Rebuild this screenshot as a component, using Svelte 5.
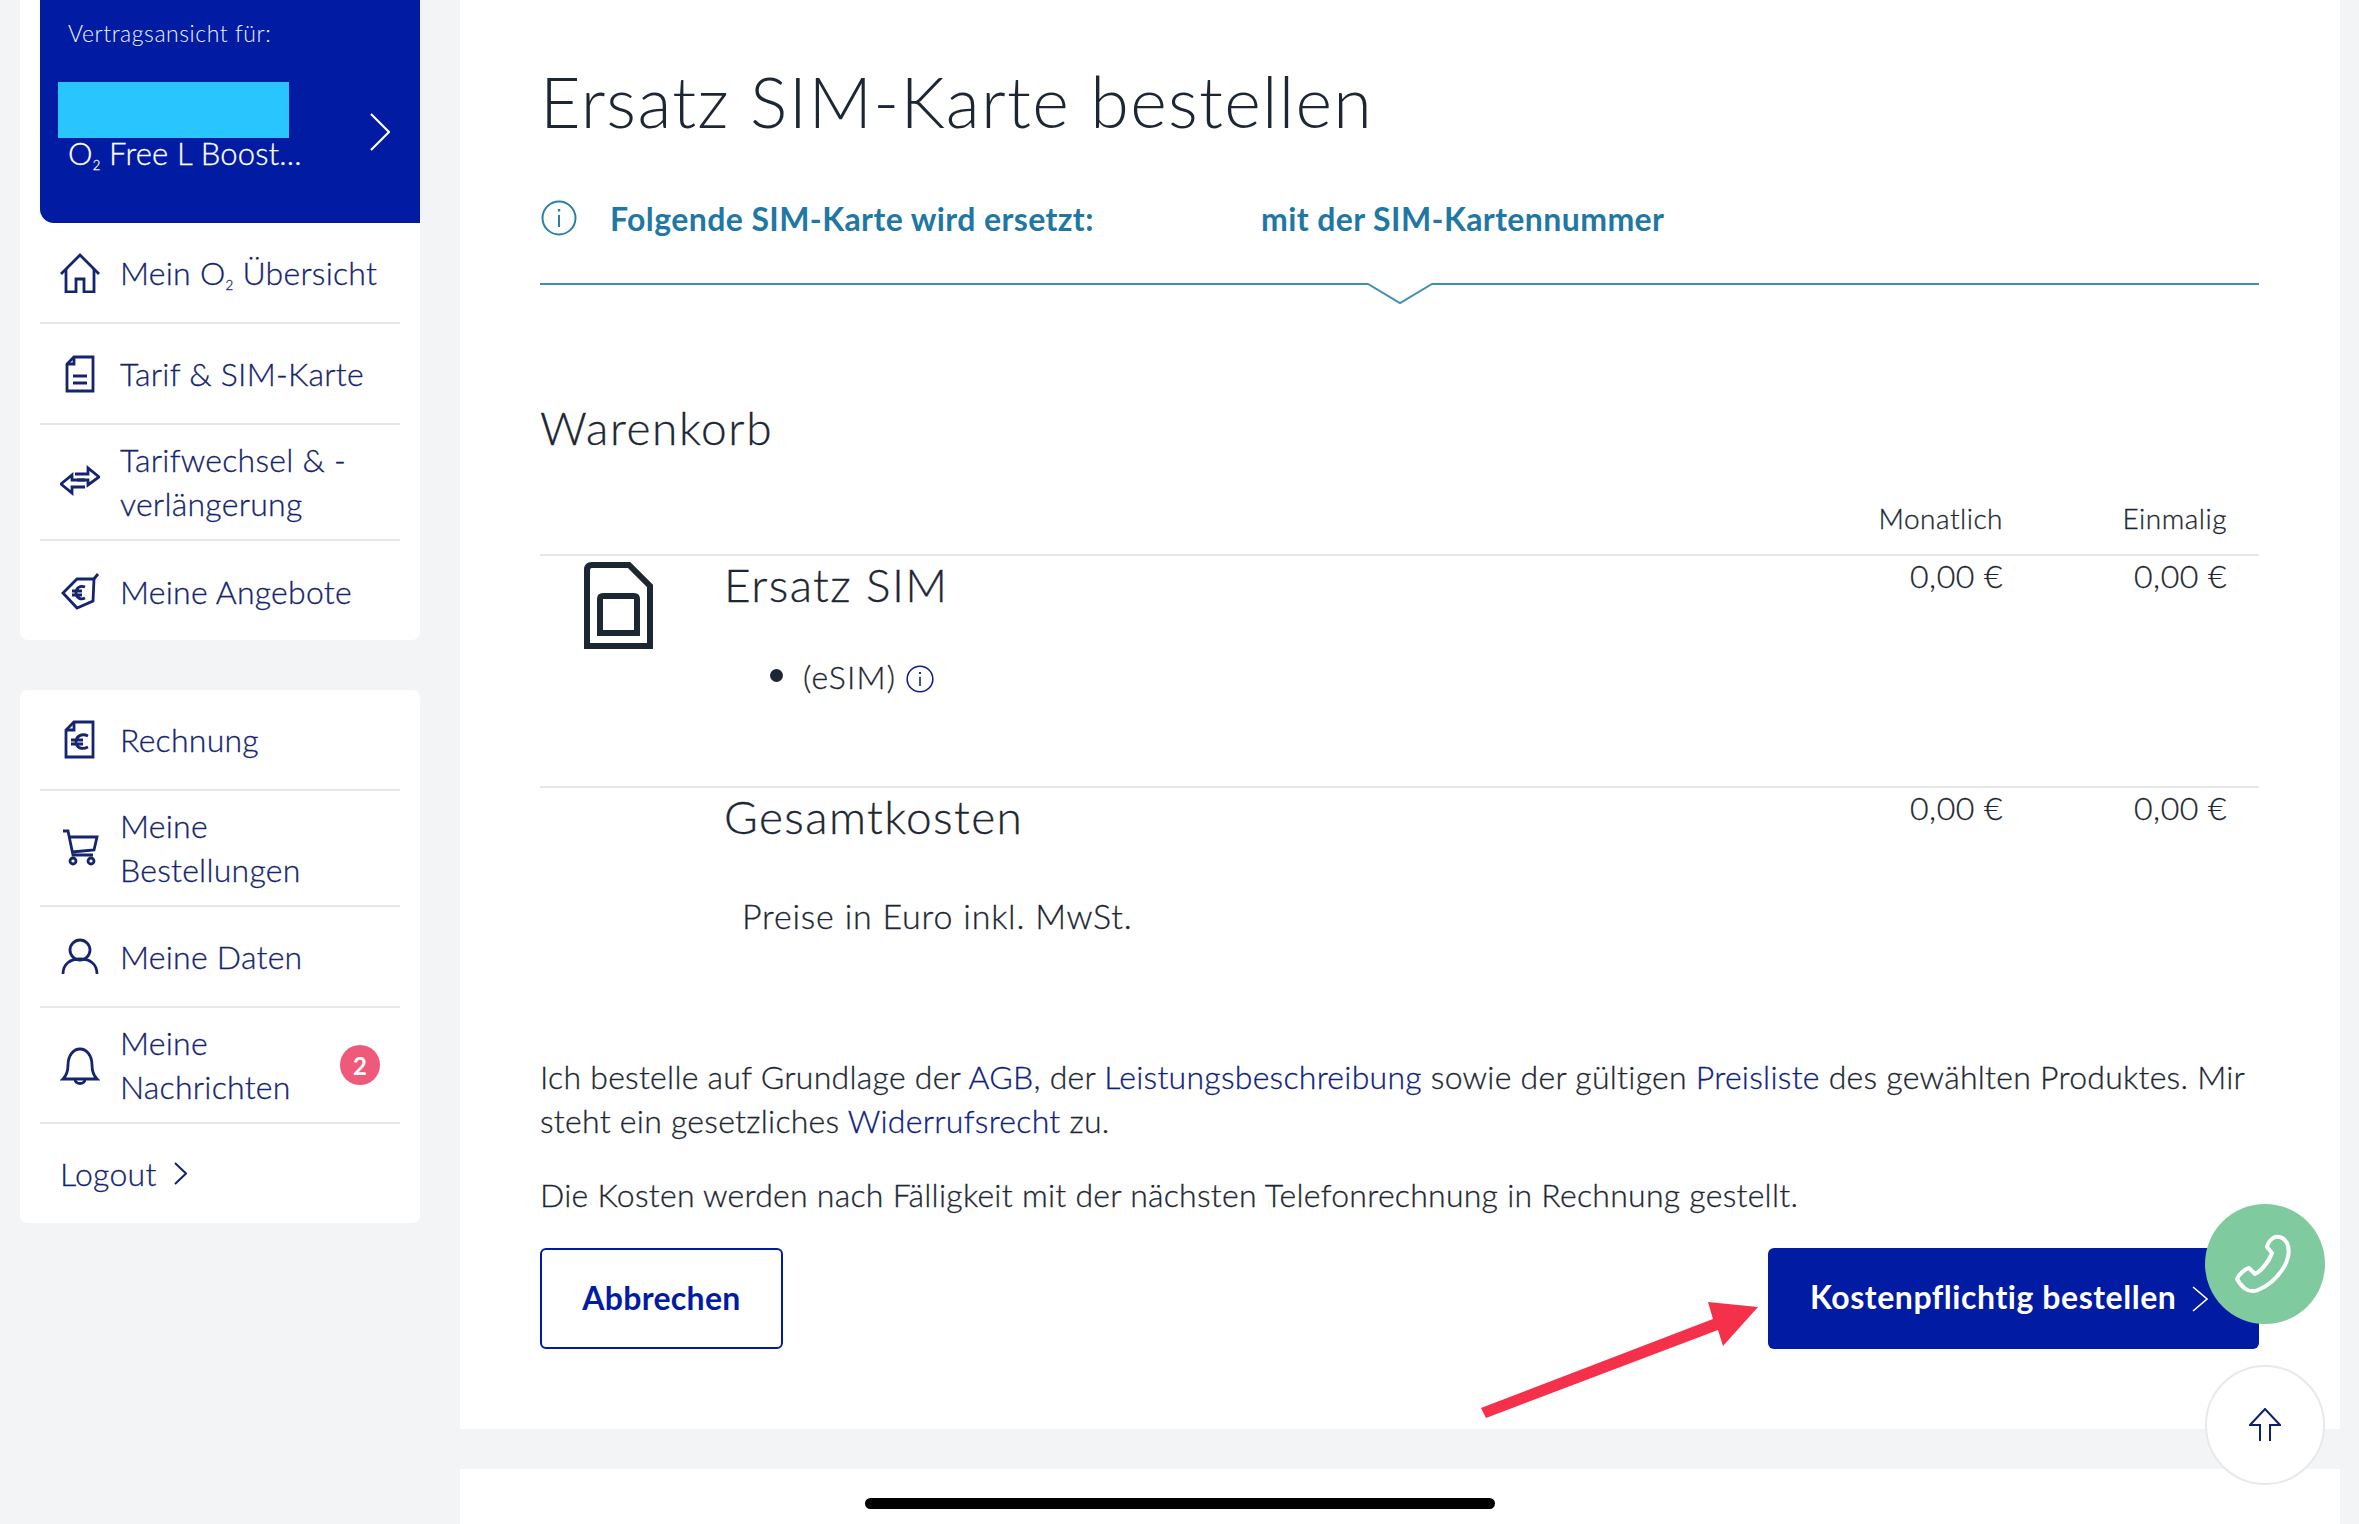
<script>
  const navTop = [
    { icon: 'home', label: 'Mein O', sub: '2', rest: ' Übersicht' },
    { icon: 'doc', label: 'Tarif & SIM-Karte' },
    { icon: 'swap', label: 'Tarifwechsel & - verlängerung' },
    { icon: 'tag', label: 'Meine Angebote' }
  ];
  const navBottom = [
    { icon: 'bill', label: 'Rechnung' },
    { icon: 'cart', label: 'Meine Bestellungen' },
    { icon: 'user', label: 'Meine Daten' },
    { icon: 'bell', label: 'Meine Nachrichten', badge: 2 }
  ];
</script>

{#snippet navIcon(name)}
  <svg class="nav-icon" viewBox="0 0 40 40" fill="none" stroke="currentColor" stroke-width="2.8">
    {#if name === 'home'}
      <path d="M1 21 20 2l19 19" />
      <path d="M6 16v23h10V26h8v13h10V16" />
    {:else if name === 'doc'}
      <path d="M14 3h19v34H7V10z" />
      <path d="M14 3v7H7M13 22h14M13 29h14" />
    {:else if name === 'swap'}
      <path d="M15 12h13V6l11 9-11 8v-5H17" />
      <path d="M25 18H12v-5L1 22l11 9v-6h13" />
    {:else if name === 'tag'}
      <path d="M34 7H17L3 21l14 15 16-7z" />
      <path d="M38 2 33 8" />
      <path d="M25 15c-5-2-9 1-9 6s5 7 9 5M12 19h10M12 23h10" />
    {:else if name === 'bill'}
      <path d="M14 2h19v35H6V10z" />
      <path d="M14 2v8H6" />
      <path d="M28 16c-6-3-12 0-12 6s6 8 12 5M11 20h12M11 24h12" />
    {:else if name === 'cart'}
      <path d="M3 3h5l5 24h20M10 9h27l-3 13-22 2" />
      <circle cx="13" cy="33" r="3" />
      <circle cx="31" cy="33" r="3" />
    {:else if name === 'user'}
      <circle cx="20" cy="13" r="10" />
      <path d="M3 37c0-10 7-15 17-15s17 5 17 15" />
    {:else if name === 'bell'}
      <path d="M3 34c4-4 5-8 5-14 0-9 5-16 12-16s12 7 12 16c0 6 1 10 5 14z" />
      <path d="M15 34c0 6 10 6 10 0" />
    {/if}
  </svg>
{/snippet}

{#snippet navList(items)}
  {#each items as item}
    <a class="nav-item" href="#top">
      {@render navIcon(item.icon)}
      <span class="nav-label">{item.label}{#if item.sub}<sub>{item.sub}</sub>{item.rest}{/if}</span>
      {#if item.badge}<span class="badge">{item.badge}</span>{/if}
    </a>
  {/each}
{/snippet}

{#snippet infoIcon(cls)}
  <svg class={cls} viewBox="0 0 36 36" fill="none" stroke="currentColor" stroke-width="2">
    <circle cx="18" cy="18" r="16.5" />
    <path d="M18 15v12" />
    <path d="M18 9v2.5" stroke-width="2.4" />
  </svg>
{/snippet}

<div class="page">
  <aside class="sidebar">
    <section class="card first">
      <div class="contract">
        <div class="contract-body">
          <div class="contract-label">Vertragsansicht für:</div>
          <div class="redacted"></div>
          <div class="contract-name">O<sub>2</sub> Free L Boost...</div>
        </div>
        <svg class="contract-arrow" viewBox="0 0 20 38" fill="none" stroke="#fff" stroke-width="2.2">
          <path d="M1 1l18 18L1 37" />
        </svg>
      </div>
      {@render navList(navTop)}
    </section>

    <section class="card second">
      {@render navList(navBottom)}
      <a class="logout" href="#top">
        Logout
        <svg viewBox="0 0 13 23" fill="none" stroke="currentColor" stroke-width="2"><path d="M1 1l11 10.5L1 22" /></svg>
      </a>
    </section>
  </aside>

  <main class="main">
    <section class="panel">
      <h1>Ersatz SIM-Karte bestellen</h1>

      <div class="notice">
        {@render infoIcon('notice-icon')}
        <strong class="notice-left">Folgende SIM-Karte wird ersetzt:</strong>
        <strong>mit der SIM-Kartennummer</strong>
      </div>
      <svg class="notice-rule" viewBox="0 0 1719 22" fill="none" stroke="#3f8fb4" stroke-width="2">
        <path d="M0 1h828l32 19 32-19h827" />
      </svg>

      <h2>Warenkorb</h2>

      <div class="cart-grid head">
        <span></span><span></span>
        <span class="amount">Monatlich</span>
        <span class="amount">Einmalig</span>
      </div>

      <div class="cart-grid row product">
        <svg class="sim" viewBox="0 0 69 87" fill="none" stroke="#1c2733" stroke-width="6">
          <path d="M3 84V8q0-5 5-5h37l21 21v60z" />
          <path d="M16 71V37q0-3 3-3h31q3 0 3 3v34z" />
        </svg>
        <div>
          <h3>Ersatz SIM</h3>
          <ul>
            <li>(eSIM) {@render infoIcon('esim-icon')}</li>
          </ul>
        </div>
        <span class="amount price">0,00 €</span>
        <span class="amount price">0,00 €</span>
      </div>

      <div class="cart-grid row total">
        <span></span>
        <h3>Gesamtkosten</h3>
        <span class="amount price">0,00 €</span>
        <span class="amount price">0,00 €</span>
      </div>

      <p class="vat">Preise in Euro inkl. MwSt.</p>

      <p class="legal">
        Ich bestelle auf Grundlage der <a href="#top">AGB</a>, der <a href="#top">Leistungsbeschreibung</a> sowie der gültigen <a href="#top">Preisliste</a> des gewählten Produktes. Mir steht ein gesetzliches <a href="#top">Widerrufsrecht</a> zu.
      </p>
      <p class="legal costs">Die Kosten werden nach Fälligkeit mit der nächsten Telefonrechnung in Rechnung gestellt.</p>

      <div class="actions">
        <button class="btn secondary">Abbrechen</button>
        <button class="btn primary">
          Kostenpflichtig bestellen
          <svg viewBox="0 0 16 26" fill="none" stroke="#fff" stroke-width="1.6"><path d="M1 1l14 12L1 25" /></svg>
        </button>
      </div>
    </section>
    <section class="panel-next"></section>
  </main>

  <svg class="red-arrow" viewBox="0 0 290 130" fill="#f5304a">
    <path d="M1 108 233 19 228 2 278 7 243 46 238 30 6 118z" />
  </svg>

  <button class="fab call" aria-label="Anrufen">
    <svg viewBox="0 0 60 60" fill="none" stroke="#fff" stroke-width="4" stroke-linejoin="round">
      <path d="M40 3c5-1 9 1 12 6 3 7 2 15-3 24-6 10-14 18-26 23-5 2-10 1-14-2-3-3-6-7-7-9 2-5 8-10 12-11l6 6c5-2 14-12 17-21l-5-6c1-5 4-8 8-10z" />
    </svg>
  </button>
  <button class="fab up" aria-label="Nach oben">
    <svg viewBox="0 0 32 34" fill="none" stroke="#0f1f6e" stroke-width="2"><path d="M11 33V17H1L16 1l15 16H21v16" /></svg>
  </button>
  <div class="home-indicator"></div>
</div>

<style>
  :global(body) {
    margin: 0;
    background: #f3f4f6;
  }

  .page {
    position: relative;
    display: flex;
    width: 2359px;
    height: 1524px;
    overflow: hidden;
    background: #f3f4f6;
    font-family: Lato, "Noto Sans", sans-serif;
    font-weight: 300;
    color: #1c2733;
  }

  /* Lato only has light and regular, the original sits in between */
  .nav-label,
  .logout,
  .contract-name,
  h2,
  h3,
  .amount,
  ul,
  .vat,
  .legal {
    -webkit-text-stroke: 0.3px currentColor;
  }

  /* sidebar */
  .sidebar {
    width: 400px;
    margin-left: 20px;
    flex: none;
  }

  .card {
    background: #fff;
    border-radius: 0 0 8px 8px;
    padding: 0 20px;
  }

  .card.first {
    height: 640px;
    box-sizing: border-box;
  }

  .card.second {
    margin-top: 50px;
    border-radius: 8px;
  }

  .contract {
    display: flex;
    align-items: center;
    justify-content: space-between;
    height: 223px;
    box-sizing: border-box;
    margin-right: -20px;
    padding: 0 30px 0 28px;
    background: #011ba3;
    border-bottom-left-radius: 14px;
    color: #fff;
  }

  .contract-body {
    align-self: flex-start;
  }

  .contract-label {
    margin-top: 19px;
    font-size: 23px;
    line-height: 28px;
    letter-spacing: 0.55px;
    color: #eef1ff;
  }

  .redacted {
    width: 231px;
    height: 56px;
    margin: 35px 0 0 -10px;
    background: #29c5ff;
  }

  .contract-name {
    font-size: 31px;
    line-height: 30px;
    letter-spacing: 0.2px;
  }

  .contract-arrow {
    width: 20px;
    height: 38px;
    margin-top: 40px;
  }

  sub {
    font-size: 0.42em;
    line-height: 0;
    vertical-align: -0.4em;
  }

  .nav-item {
    display: flex;
    align-items: center;
    gap: 20px;
    min-height: 101px;
    box-sizing: border-box;
    padding: 13px 0 13px 20px;
    border-bottom: 2px solid #e6e7e9;
    color: #14246f;
    text-decoration: none;
  }

  .first .nav-item:last-child {
    border-bottom: 0;
  }

  .nav-icon {
    width: 40px;
    height: 40px;
    flex: none;
  }

  .nav-label {
    flex: 1;
    font-size: 32px;
    line-height: 44px;
    letter-spacing: 0.25px;
    padding-right: 10px;
  }

  .badge {
    display: flex;
    align-items: center;
    justify-content: center;
    width: 40px;
    height: 40px;
    flex: none;
    margin-right: 20px;
    border-radius: 50%;
    background: #ef5a7a;
    color: #fff;
    font-size: 24px;
    font-weight: 700;
  }

  .logout {
    display: flex;
    align-items: center;
    gap: 17px;
    height: 99px;
    padding-left: 20px;
    font-size: 32px;
    letter-spacing: 0.3px;
    color: #14246f;
    text-decoration: none;
  }

  .logout svg {
    width: 13px;
    height: 23px;
  }

  /* main column */
  .main {
    width: 1880px;
    margin-left: 40px;
    flex: none;
  }

  .panel {
    height: 1429px;
    box-sizing: border-box;
    padding: 59px 80px 0 80px;
    background: #fff;
  }

  .panel-next {
    height: 80px;
    margin-top: 40px;
    background: #fff;
  }

  h1 {
    margin: 0;
    font-size: 70px;
    line-height: 84px;
    font-weight: 300;
    letter-spacing: 1.3px;
    color: #1c2733;
  }

  .notice {
    display: flex;
    align-items: center;
    height: 44px;
    margin-top: 53px;
    font-size: 32px;
    letter-spacing: 0.4px;
    color: #1f78a4;
  }

  .notice strong {
    font-weight: 700;
  }

  .notice-left {
    width: 651px;
  }

  :global(.notice-icon) {
    width: 36px;
    height: 36px;
    margin: 0 33px 0 1px;
    color: #2a7fa8;
  }

  .notice-rule {
    display: block;
    width: 1719px;
    height: 22px;
    margin-top: 43px;
  }

  h2 {
    margin: 93px 0 0;
    font-size: 46px;
    line-height: 60px;
    font-weight: 300;
    letter-spacing: 1.6px;
  }

  .cart-grid {
    display: grid;
    grid-template-columns: 184px 1fr 224px 224px;
    width: 1719px;
  }

  .head {
    height: 64px;
    margin-top: 32px;
    font-size: 28px;
    line-height: 36px;
    padding-top: 10px;
    box-sizing: border-box;
  }

  .amount {
    text-align: right;
    padding-right: 32px;
    letter-spacing: 0.5px;
  }

  .price {
    font-size: 32px;
    line-height: 40px;
  }

  .row {
    border-top: 2px solid #e6e7e9;
    box-sizing: border-box;
  }

  .product {
    height: 232px;
  }

  .total {
    height: 88px;
  }

  .sim {
    width: 69px;
    height: 87px;
    margin: 6px 0 0 44px;
  }

  h3 {
    margin: 0;
    font-size: 46px;
    line-height: 58px;
    font-weight: 300;
    letter-spacing: 1.4px;
  }

  ul {
    margin: 40px 0 0;
    padding-left: 79px;
    font-size: 32px;
    line-height: 40px;
    letter-spacing: 1.2px;
  }

  li::marker {
    font-size: 40px;
  }

  :global(.esim-icon) {
    width: 28px;
    height: 28px;
    vertical-align: -4px;
    color: #0f1f7e;
  }

  .vat {
    margin: 20px 0 0 202px;
    font-size: 34px;
    line-height: 44px;
    letter-spacing: 0.8px;
  }

  .legal {
    width: 1719px;
    margin: 117px 0 0;
    font-size: 32px;
    line-height: 44px;
    letter-spacing: 0.26px;
  }

  .legal a {
    color: #0d2180;
    text-decoration: none;
  }

  .legal.costs {
    margin-top: 30px;
  }

  .actions {
    display: flex;
    justify-content: space-between;
    width: 1719px;
    margin-top: 31px;
  }

  .btn {
    height: 101px;
    box-sizing: border-box;
    border-radius: 6px;
    font-family: inherit;
    font-size: 32px;
    font-weight: 700;
    padding-bottom: 4px;
  }

  .secondary {
    width: 243px;
    background: #fff;
    border: 2px solid #011ba3;
    color: #011ba3;
    letter-spacing: 0.3px;
  }

  .primary {
    display: flex;
    align-items: center;
    gap: 16px;
    width: 491px;
    padding: 0 0 4px 42px;
    background: #011ba3;
    border: 0;
    color: #fff;
    letter-spacing: 0.55px;
  }

  .primary svg {
    width: 16px;
    height: 26px;
    margin-top: 4px;
  }

  /* things floating over the page */
  .red-arrow {
    position: absolute;
    left: 1480px;
    top: 1300px;
    width: 290px;
    height: 130px;
    overflow: visible;
  }

  .fab {
    position: absolute;
    left: 2205px;
    width: 120px;
    height: 120px;
    padding: 0;
    border-radius: 50%;
    display: flex;
    align-items: center;
    justify-content: center;
  }

  .call {
    top: 1204px;
    background: #7fcb9f;
    border: 0;
  }

  .call svg {
    width: 60px;
    height: 60px;
  }

  .up {
    top: 1365px;
    background: #fff;
    border: 2px solid #e8e9eb;
  }

  .up svg {
    width: 32px;
    height: 34px;
  }

  .home-indicator {
    position: absolute;
    left: 865px;
    top: 1498px;
    width: 630px;
    height: 11px;
    border-radius: 6px;
    background: #000;
  }
</style>
